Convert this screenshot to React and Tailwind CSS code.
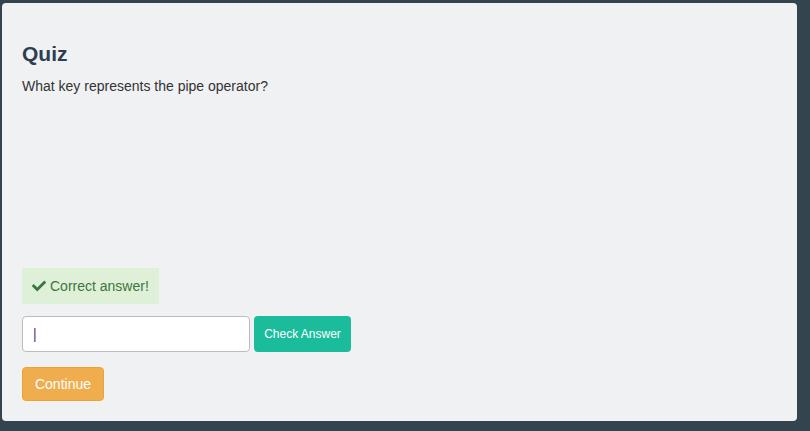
import React, { useState } from 'react';

const CheckIcon = () => (
  <svg viewBox="0 0 512 512" className="h-[14px] w-[14px] fill-[#3c763d]">
    <path d="M173.9 439.4l-166.4-166.4c-10-10-10-26.2 0-36.2l36.2-36.2c10-10 26.2-10 36.2 0L192 312.7 432.1 72.6c10-10 26.2-10 36.2 0l36.2 36.2c10 10 10 26.2 0 36.2L210.1 439.4c-10 10-26.2 10-36.2 0z" />
  </svg>
);

const App = () => {
  const [answer, setAnswer] = useState('|');

  return (
    <div className="h-[431px] w-[810px] bg-[#34444f] pl-[2px] pr-[13px] pt-[3px] pb-[10px] font-['Liberation_Sans',Arial,sans-serif]">
      <div className="flex h-full flex-col rounded-[4px] bg-[#f0f1f3] px-[20px]">
        <h3 className="mt-[38px] text-[21px] font-bold leading-[26px] text-[#2c3e50]">Quiz</h3>
        <p className="mt-[9px] text-[14px] leading-[20px] text-[#333]">What key represents the pipe operator?</p>

        <div className="mt-[172px] flex h-[36px] w-[137px] items-center gap-[4px] bg-[#dff0d8] px-[10px] text-[14px] text-[#3c763d]">
          <CheckIcon />
          <span>Correct answer!</span>
        </div>

        <div className="mt-[12px] flex gap-[4px]">
          <input
            value={answer}
            onChange={(e) => setAnswer(e.target.value)}
            className="h-[36px] w-[228px] rounded-[4px] border border-[#bcbcbc] bg-white px-[10px] text-[14px] text-[#5b2a86] outline-none"
          />
          <button className="h-[36px] w-[97px] rounded-[4px] bg-[#1abc9c] text-[12px] text-white">
            Check Answer
          </button>
        </div>

        <button className="mt-[15px] h-[34px] w-[82px] rounded-[4px] border border-[#eea236] bg-[#f0ad4e] text-[14px] text-white">
          Continue
        </button>
      </div>
    </div>
  );
};

export default App;
